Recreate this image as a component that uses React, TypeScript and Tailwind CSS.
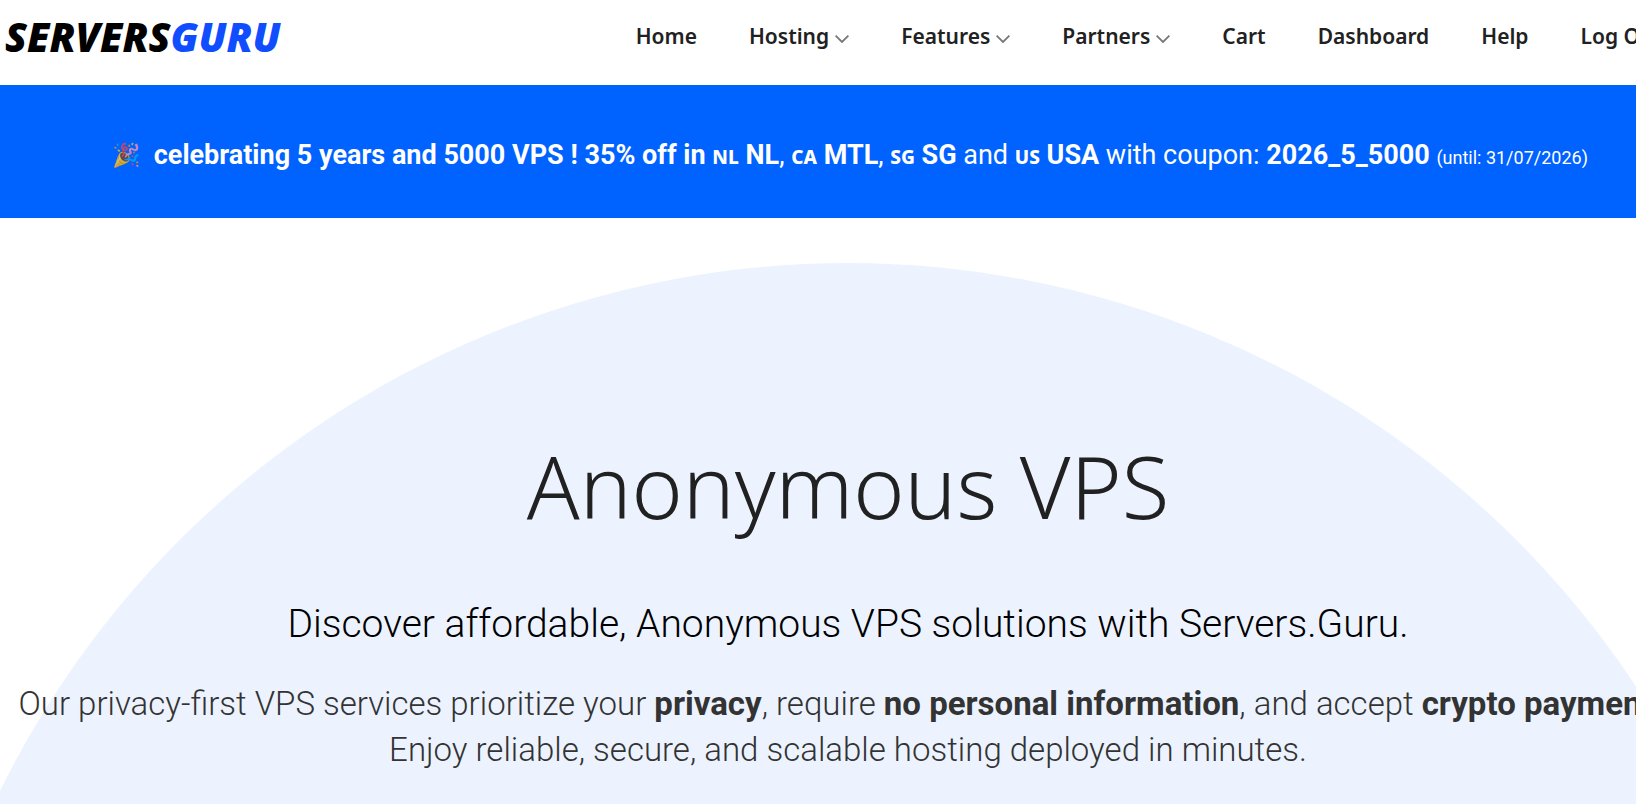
import React from "react";

type NavItem = {
  label: string;
  href: string;
  dropdown?: boolean;
};

const navItems: NavItem[] = [
  { label: "Home", href: "#home" },
  { label: "Hosting", href: "#hosting", dropdown: true },
  { label: "Features", href: "#features", dropdown: true },
  { label: "Partners", href: "#partners", dropdown: true },
  { label: "Cart", href: "#cart" },
  { label: "Dashboard", href: "#dashboard" },
  { label: "Help", href: "#help" },
  { label: "Log Out", href: "#logout" },
];

function Chevron() {
  return (
    <svg
      className="mt-1 ml-1.5 h-2 w-3.5 text-[#777777]"
      viewBox="0 0 14 8"
      fill="none"
      stroke="currentColor"
      strokeWidth="1.8"
      aria-hidden="true"
    >
      <path d="M0.6 0.7 L7 7 L13.4 0.7" />
    </svg>
  );
}

function Header() {
  return (
    <header className="flex h-[85px] items-center justify-between bg-white pr-[34px] pb-3 pl-[5px]">
      <a
        href="#home"
        className="text-[40px] leading-none font-black text-black italic"
      >
        SERVERS<span className="text-[#104dff]">GURU</span>
      </a>
      <nav>
        <ul className="flex gap-[52px] text-[21px] font-semibold text-[#212121]">
          {navItems.map((item) => (
            <li key={item.label}>
              <a href={item.href} className="flex items-center whitespace-nowrap">
                {item.label}
                {item.dropdown && <Chevron />}
              </a>
            </li>
          ))}
        </ul>
      </nav>
    </header>
  );
}

// two letter country code in front of a location
function Flag({ code }: { code: string }) {
  return (
    <span className="font-['Noto_Sans',sans-serif] text-[19px] leading-none font-extrabold">
      {code}
    </span>
  );
}

function Banner() {
  return (
    <div className="flex h-[133px] items-center justify-center bg-[#0062ff] pt-1.5 pl-1 font-['Roboto',sans-serif] text-[27px] leading-10 whitespace-nowrap text-white">
      <p>
        <span className="mr-1.5 align-[1px] text-[23px] leading-none opacity-80">
          🎉
        </span>{" "}
        <strong>celebrating 5 years and 5000 VPS ! 35% off in</strong>{" "}
        <Flag code="NL" /> <strong>NL</strong>, <Flag code="CA" />{" "}
        <strong>MTL</strong>, <Flag code="SG" /> <strong>SG</strong> and{" "}
        <Flag code="US" /> <strong>USA</strong> with coupon:{" "}
        <strong>2026_5_5000</strong>{" "}
        <small className="text-[18px] leading-none">(until: 31/07/2026)</small>
      </p>
    </div>
  );
}

function Hero() {
  return (
    <section className="relative isolate flex-1 overflow-hidden pt-[217px] text-center">
      {/* background circle */}
      <div className="absolute top-[45px] left-1/2 -z-10 size-[1890px] -translate-x-1/2 rounded-full bg-[#ecf3ff]" />
      <h1 className="text-[87px] leading-[100px] font-light text-[#212121]">
        Anonymous VPS
      </h1>
      <div className="font-['Roboto',sans-serif] leading-[46px] font-light">
        <h2 className="mt-[66px] text-[39px] text-black">
          Discover affordable, Anonymous VPS solutions with Servers.Guru.
        </h2>
        <p className="mt-[34px] text-[33px] text-[#333333]">
          Our privacy-first VPS services prioritize your{" "}
          <strong className="font-bold">privacy</strong>, require{" "}
          <strong className="font-bold">no personal information</strong>, and
          accept <strong className="font-bold">crypto payments</strong>.
          <br />
          Enjoy reliable, secure, and scalable hosting deployed in minutes.
        </p>
      </div>
    </section>
  );
}

function App() {
  return (
    <div className="overflow-hidden bg-white font-['Noto_Sans',sans-serif]">
      <div className="flex min-h-screen min-w-[1696px] flex-col">
        <Header />
        <Banner />
        <Hero />
      </div>
    </div>
  );
}

export default App;
